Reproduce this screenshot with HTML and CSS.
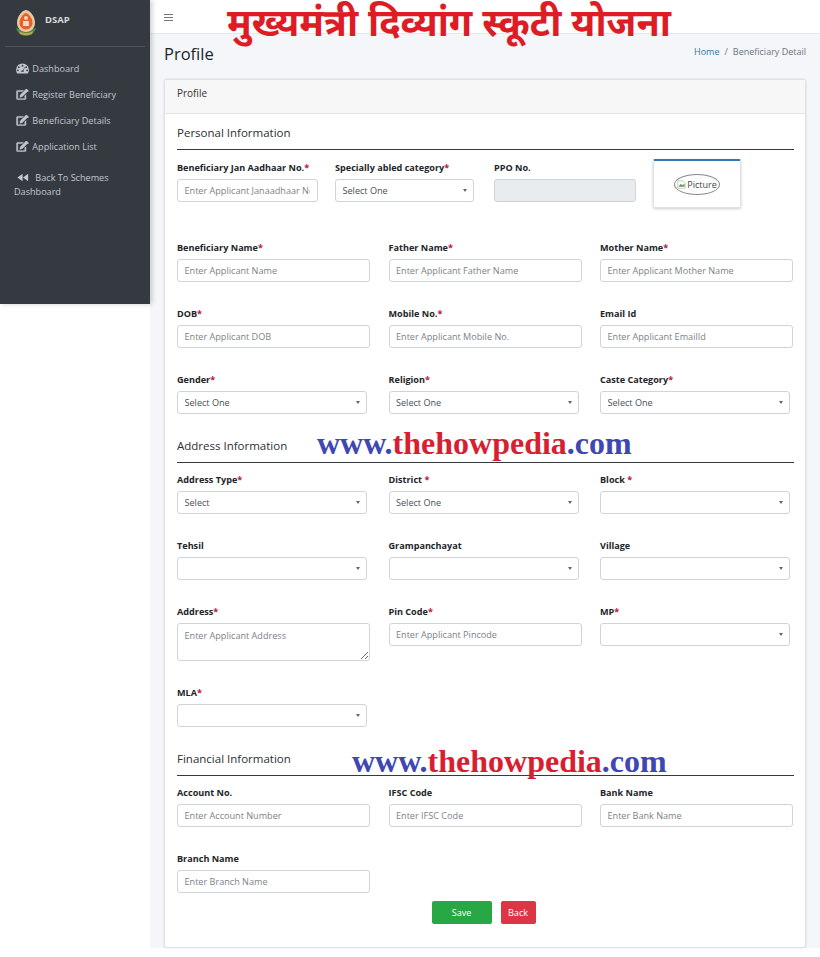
FILE: index.html
```html
<!DOCTYPE html>
<html lang="en">
<head>
  <meta charset="UTF-8">
  <meta name="viewport" content="width=device-width, initial-scale=1.0">
  <title>Profile</title>
  <link rel="stylesheet" href="styles.css">
</head>
<body>
  <div class="wrapper">
    <!-- Sidebar -->
    <aside class="sidebar">
      <div class="brand">
        <svg class="brand-logo" viewBox="2 0 22 28">
          <path d="M3 19c1 5 6 8 10 8s9-3 10-8l-3 1H6z" fill="#3f8a4a"/>
          <path d="M4 14c0-6 4-12 9-13 5 1 9 7 9 13 0 5-4 9-9 9s-9-4-9-9z" fill="#e9c9a0"/>
          <path d="M6.500 14c0-4 3-9 6.500-10 3.500 1 6.500 6 6.500 10 0 3.500-3 6.500-6.500 6.500s-6.500-3-6.500-6.500z" fill="#e2622a"/>
          <circle cx="13" cy="9" r="2" fill="#f6d9b8"/>
          <rect x="10" y="12" width="6" height="5" fill="#f6d9b8"/>
          <path d="M6 22c3 2.500 11 2.500 14 0l-1 3c-3 1.500-9 1.500-12 0z" fill="#c9a24a"/>
        </svg>
        <span class="brand-text">DSAP</span>
      </div>
      <nav class="side-nav">
        <a class="side-link" href="#">
          <svg class="side-icon" viewBox="0 0 14 12"><path fill-rule="evenodd" d="M7 .5A7 7 0 0 0 0 7.500c0 1.300.4 2.600 1 3.700.2.300.4.300.7.300h10.600c.3 0 .5 0 .7-.3.600-1.100 1-2.400 1-3.700a7 7 0 0 0-7-7zM7 2a1 1 0 1 1 0 2 1 1 0 0 1 0-2zM3 3.500a1 1 0 1 1 0 2 1 1 0 0 1 0-2zm8 0a1 1 0 1 1 0 2 1 1 0 0 1 0-2zM2 7a1 1 0 1 1 0 2 1 1 0 0 1 0-2zm10 0a1 1 0 1 1 0 2 1 1 0 0 1 0-2zM9 4.500l.6.300L8 8.300c.3.300.5.700.5 1.200H5.500A1.500 1.500 0 0 1 7.600 8z"/></svg>
          Dashboard
        </a>
        <a class="side-link" href="#">
          <svg class="side-icon icon-edit" viewBox="0 0 14 12"><path d="M1.500 1.500H8L6.800 2.800H1.800v7.700h7.700V7.500l1.300-1.300v4.300c0 .5-.5 1-1 1H1.500c-.5 0-1-.5-1-1V2.500c0-.5.5-1 1-1z"/><path d="M4.500 6.500 10.500.6l2 2-6 5.900-2.300.4zM11 .1l.5-.1 2 2-.1.500-.8.800-2.400-2.400z"/></svg>
          Register Beneficiary
        </a>
        <a class="side-link" href="#">
          <svg class="side-icon icon-edit" viewBox="0 0 14 12"><path d="M1.500 1.500H8L6.800 2.800H1.800v7.700h7.700V7.500l1.300-1.300v4.300c0 .5-.5 1-1 1H1.500c-.5 0-1-.5-1-1V2.500c0-.5.5-1 1-1z"/><path d="M4.500 6.500 10.500.6l2 2-6 5.900-2.300.4zM11 .1l.5-.1 2 2-.1.500-.8.800-2.400-2.400z"/></svg>
          Beneficiary Details
        </a>
        <a class="side-link" href="#">
          <svg class="side-icon icon-edit" viewBox="0 0 14 12"><path d="M1.500 1.500H8L6.800 2.800H1.800v7.700h7.700V7.500l1.300-1.300v4.300c0 .5-.5 1-1 1H1.500c-.5 0-1-.5-1-1V2.500c0-.5.5-1 1-1z"/><path d="M4.500 6.500 10.500.6l2 2-6 5.900-2.300.4zM11 .1l.5-.1 2 2-.1.500-.8.800-2.400-2.400z"/></svg>
          Application List
        </a>
        <a class="side-link back-link" href="#">
          <svg class="side-icon back-icon" viewBox="0 0 14 10"><path d="M6.500.5v9L.5 5zM13 .5v9L7 5z"/></svg>
          Back To Schemes Dashboard
        </a>
      </nav>
    </aside>

    <!-- Main -->
    <main class="main">
      <header class="topbar">
        <span class="burger"></span>
      </header>

      <div class="page-head">
        <h1>Profile</h1>
        <div class="crumbs"><a href="#">Home</a><span class="crumb-sep">/</span>Beneficiary Detail</div>
      </div>

      <div class="card">
        <div class="card-header">Profile</div>
        <form class="card-body">
          <h2 class="section-title section-first">Personal Information</h2>
          <div class="row-four">
            <div class="field">
              <label>Beneficiary Jan Aadhaar No.<i>*</i></label>
              <input type="text" placeholder="Enter Applicant Janaadhaar No">
            </div>
            <div class="field">
              <label>Specially abled category<i>*</i></label>
              <div class="select"><select><option>Select One</option></select></div>
            </div>
            <div class="field">
              <label>PPO No.</label>
              <input type="text" disabled>
            </div>
            <div class="photo">
              <span class="photo-alt">
                <svg viewBox="0 0 12 12"><path d="M1 1h7l3 3v7H1z" fill="#fff" stroke="#aaa" stroke-width=".8"/><path d="M2 9l3-4 2 2 3-2v4z" fill="#5d9b4d"/></svg>
                Picture
              </span>
            </div>
          </div>

          <div class="rows">
            <div class="row">
              <div class="field"><label>Beneficiary Name<i>*</i></label><input type="text" placeholder="Enter Applicant Name"></div>
              <div class="field"><label>Father Name<i>*</i></label><input type="text" placeholder="Enter Applicant Father Name"></div>
              <div class="field"><label>Mother Name<i>*</i></label><input type="text" placeholder="Enter Applicant Mother Name"></div>
            </div>
            <div class="row">
              <div class="field"><label>DOB<i>*</i></label><input type="text" placeholder="Enter Applicant DOB"></div>
              <div class="field"><label>Mobile No.<i>*</i></label><input type="text" placeholder="Enter Applicant Mobile No."></div>
              <div class="field"><label>Email Id</label><input type="text" placeholder="Enter Applicant EmailId"></div>
            </div>
            <div class="row">
              <div class="field"><label>Gender<i>*</i></label><div class="select"><select><option>Select One</option></select></div></div>
              <div class="field"><label>Religion<i>*</i></label><div class="select"><select><option>Select One</option></select></div></div>
              <div class="field"><label>Caste Category<i>*</i></label><div class="select"><select><option>Select One</option></select></div></div>
            </div>
          </div>

          <h2 class="section-title">Address Information</h2>
          <div class="rows">
            <div class="row">
              <div class="field"><label>Address Type<i>*</i></label><div class="select"><select><option>Select</option></select></div></div>
              <div class="field"><label>District <i>*</i></label><div class="select"><select><option>Select One</option></select></div></div>
              <div class="field"><label>Block <i>*</i></label><div class="select"><select></select></div></div>
            </div>
            <div class="row">
              <div class="field"><label>Tehsil</label><div class="select"><select></select></div></div>
              <div class="field"><label>Grampanchayat</label><div class="select"><select></select></div></div>
              <div class="field"><label>Village</label><div class="select"><select></select></div></div>
            </div>
            <div class="row">
              <div class="field"><label>Address<i>*</i></label><textarea placeholder="Enter Applicant Address"></textarea></div>
              <div class="field"><label>Pin Code<i>*</i></label><input type="text" placeholder="Enter Applicant Pincode"></div>
              <div class="field"><label>MP<i>*</i></label><div class="select"><select></select></div></div>
            </div>
            <div class="row">
              <div class="field"><label>MLA<i>*</i></label><div class="select"><select></select></div></div>
            </div>
          </div>

          <h2 class="section-title">Financial Information</h2>
          <div class="rows">
            <div class="row">
              <div class="field"><label>Account No.</label><input type="text" placeholder="Enter Account Number"></div>
              <div class="field"><label>IFSC Code</label><input type="text" placeholder="Enter IFSC Code"></div>
              <div class="field"><label>Bank Name</label><input type="text" placeholder="Enter Bank Name"></div>
            </div>
            <div class="row">
              <div class="field"><label>Branch Name</label><input type="text" placeholder="Enter Branch Name"></div>
            </div>
          </div>

          <div class="actions">
            <button type="button" class="btn btn-save">Save</button>
            <button type="button" class="btn btn-back">Back</button>
          </div>
        </form>
      </div>
    </main>
  </div>

  <!-- Text stamped over the screenshot -->
  <div class="stamp-title">मुख्यमंत्री दिव्यांग स्कूटी योजना</div>
  <div class="stamp-url stamp-one"><b>www.</b>thehowpedia<b>.com</b></div>
  <div class="stamp-url stamp-two"><b>www.</b>thehowpedia<b>.com</b></div>
</body>
</html>
```

FILE: styles.css
```css
* {
  box-sizing: border-box;
}
body {
  margin: 0;
  height: 957px;
  overflow: hidden;
  position: relative;
  background-color: #fff;
  font-family: "Open Sans", "Noto Sans", sans-serif;
  font-size: 10px;
  color: #212529;
}
.wrapper {
  display: flex;
  align-items: flex-start;
}

/* Sidebar */
.sidebar {
  width: 150px;
  height: 304px;
  flex: none;
  background-color: #343a40;
  color: #c2c7d0;
  box-shadow: 2px 0 5px rgba(0, 0, 0, .2);
  position: relative;
}
.brand {
  height: 47px;
  margin: 0 5px;
  padding: 9px 0 0 9px;
  display: flex;
  align-items: flex-start;
  border-bottom: 1px solid #4b545c;
}
.brand-logo {
  width: 24px;
  height: 28px;
}
.brand-text {
  margin: 5px 0 0 7px;
  font-size: 9.500px;
  font-weight: 700;
  line-height: 12px;
  color: #d5d9de;
}
.side-nav {
  padding: 9px 14px 0 16px;
}
.side-link {
  display: block;
  height: 26px;
  line-height: 25px;
  color: #c2c7d0;
  text-decoration: none;
  font-size: 9.100px;
  white-space: nowrap;
}
.side-icon {
  width: 13px;
  height: 11px;
  margin-right: 1px;
  fill: #c2c7d0;
  vertical-align: -2px;
}
.icon-edit {
  stroke: #c2c7d0;
  stroke-width: .5;
}
.back-link {
  height: auto;
  margin: 11px 0 0 -2px;
  line-height: 14px;
  white-space: normal;
  text-indent: 3px;
}
.back-icon {
  width: 12px;
  height: 9px;
  margin-right: 4px;
  vertical-align: -.5px;
}

/* Main */
.main {
  flex: 1;
  height: 948px;
  background-color: #f4f6f9;
}
.topbar {
  height: 34px;
  padding: 14px 0 0 14px;
  background-color: #fff;
  border-bottom: 1px solid #e6e8eb;
}
.burger {
  display: block;
  width: 9px;
  height: 7px;
  border-top: 1px solid #777;
  border-bottom: 1px solid #777;
  position: relative;
}
.burger::after {
  content: "";
  position: absolute;
  left: 0;
  right: 0;
  top: 2px;
  height: 1px;
  background-color: #777;
}
.page-head {
  height: 45px;
  padding: 8px 14px 0;
  display: flex;
  justify-content: space-between;
  align-items: flex-start;
}
.page-head h1 {
  margin: 0;
  font-size: 16.500px;
  font-weight: 500;
  line-height: 24px;
  color: #212529;
}
.crumbs {
  margin-top: 3px;
  font-size: 9px;
  line-height: 14px;
  color: #6c757d;
}
.crumbs a {
  color: #38759e;
  text-decoration: none;
}
.crumb-sep {
  margin: 0 5px;
}
.card {
  margin: 0 14px 0 14px;
  height: 869px;
  background-color: #fff;
  border: 1px solid #dfe1e4;
  border-radius: 3px;
  box-shadow: 0 0 2px rgba(0, 0, 0, .15);
}
.card-header {
  height: 34px;
  padding: 0 12px;
  line-height: 27px;
  font-size: 10px;
  background-color: #f7f7f7;
  border-bottom: 1px solid #e4e4e4;
  color: #333;
}
.card-body {
  padding: 11px 11px 0 12px;
}
.section-title {
  margin: 24px 0 10px;
  padding-bottom: 8px;
  font-size: 11.500px;
  font-weight: 500;
  line-height: 16px;
  color: #2b2f33;
  border-bottom: 1px solid #343a40;
}
.section-first {
  margin: 0 0 11px;
}
.row-four {
  display: grid;
  grid-template-columns: 158px 159px 159px 88px;
  margin-bottom: 33px;
}
.row-four .field {
  padding-right: 17.500px;
}
.rows {
  display: flex;
  flex-direction: column;
  gap: 25px;
}
.row {
  display: grid;
  grid-template-columns: repeat(3, 193px);
  column-gap: 18.500px;
}
.field label {
  display: block;
  height: 12px;
  margin-bottom: 6px;
  font-size: 9.100px;
  font-weight: 700;
  line-height: 14px;
  white-space: nowrap;
  color: #212529;
}
.field label i {
  font-style: normal;
  color: #c0143c;
}
.field input,
.field textarea,
.field select {
  display: block;
  width: 100%;
  height: 23px;
  padding: 0 6.500px;
  font-family: inherit;
  font-size: 9.100px;
  color: #495057;
  background-color: #fff;
  border: 1px solid #ced4da;
  border-radius: 3px;
  outline: none;
}
.field input::placeholder,
.field textarea::placeholder {
  color: #7b8289;
  opacity: 1;
}
.field input:disabled {
  background-color: #e9ecef;
}
.field textarea {
  height: 38px;
  padding-top: 5px;
  resize: vertical;
}
.field select {
  appearance: none;
}
.select {
  position: relative;
  width: 190px;
}
.row-four .select {
  width: 139px;
}
.select::after {
  content: "";
  position: absolute;
  right: 7px;
  top: 10px;
  border-left: 2.500px solid transparent;
  border-right: 2.500px solid transparent;
  border-top: 3px solid #666;
  pointer-events: none;
}
.photo {
  height: 49px;
  margin-top: -2px;
  display: flex;
  align-items: center;
  justify-content: center;
  background-color: #fff;
  border: 1px solid #dfe1e4;
  border-top: 2px solid #2f77b5;
  border-radius: 2px;
  box-shadow: 0 1px 3px rgba(0, 0, 0, .2);
}
.photo-alt {
  width: 46px;
  height: 21px;
  margin-top: 1px;
  display: flex;
  align-items: center;
  justify-content: center;
  gap: 1px;
  font-size: 9px;
  color: #444;
  border: 1px solid #8a8a8a;
  border-radius: 50%;
}
.photo-alt svg {
  width: 9px;
  height: 9px;
  flex: none;
}
.actions {
  margin-top: 8px;
  padding-right: 4px;
  display: flex;
  justify-content: center;
  gap: 9px;
}
.btn {
  height: 23px;
  padding: 0;
  font-family: inherit;
  font-size: 9.100px;
  color: #fff;
  border: 1px solid transparent;
  border-radius: 2px;
}
.btn-save {
  width: 60px;
  background-color: #28a745;
}
.btn-back {
  width: 35px;
  background-color: #dc3545;
}

/* Overlaid stamps */
.stamp-title {
  position: absolute;
  left: 227px;
  top: 2px;
  font-family: "Noto Sans Devanagari", "Noto Sans", "Lohit Devanagari", sans-serif;
  font-size: 38px;
  font-weight: 700;
  line-height: 50px;
  color: #dd1c26;
  white-space: nowrap;
}
.stamp-url {
  position: absolute;
  font-family: "Liberation Serif", serif;
  font-size: 32px;
  font-weight: 700;
  line-height: 34px;
  color: #d81f32;
  white-space: nowrap;
}
.stamp-url b {
  color: #3f47b3;
}
.stamp-one {
  left: 317px;
  top: 426px;
}
.stamp-two {
  left: 352px;
  top: 744px;
}
```
